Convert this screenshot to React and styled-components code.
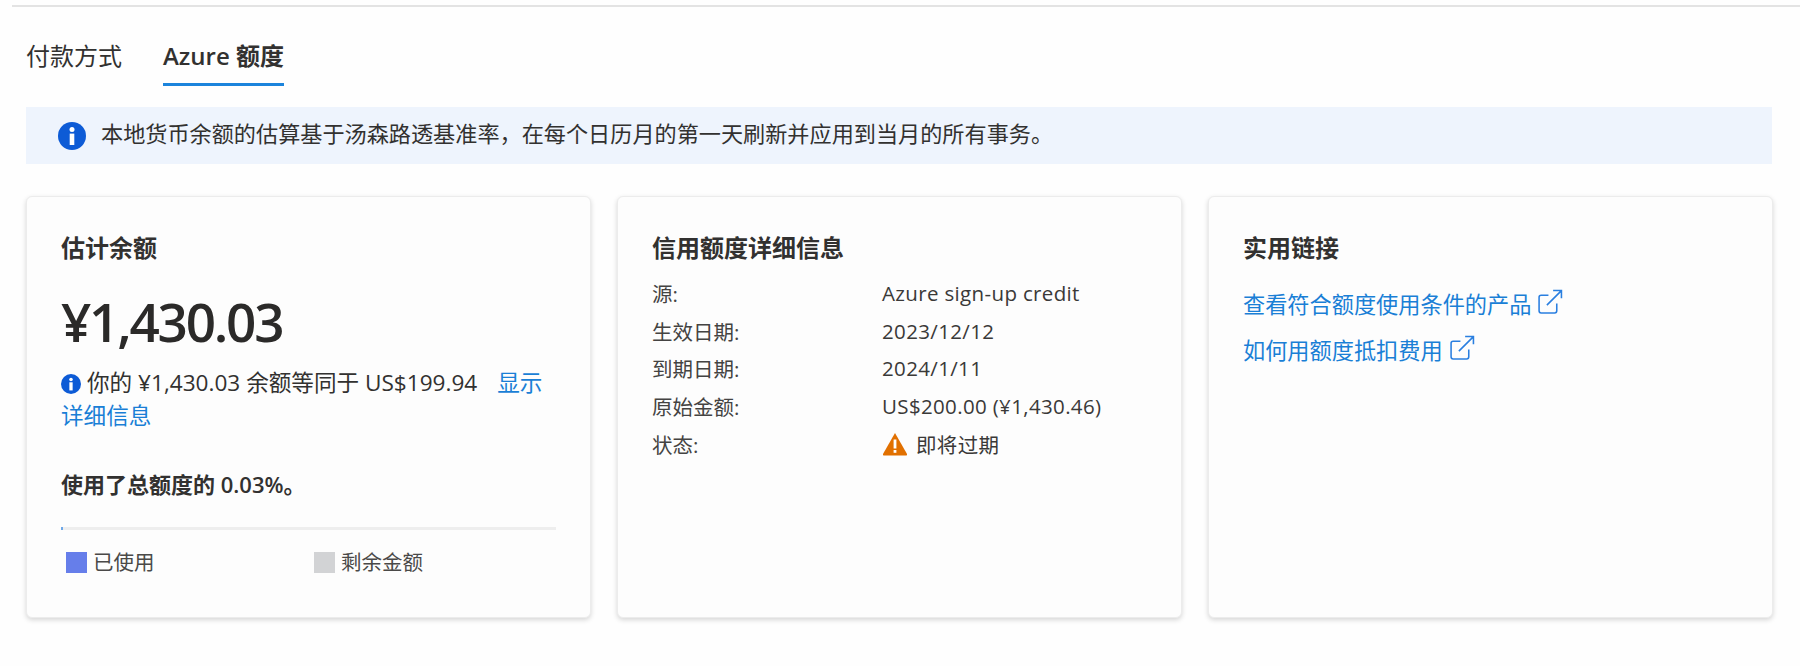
import React from 'react';
import styled, { createGlobalStyle } from 'styled-components';

const GlobalStyle = createGlobalStyle`
  html, body {
    margin: 0;
    padding: 0;
    background: #fefefe;
    color: #323130;
    font-family: "Open Sans", "Noto Sans CJK SC", sans-serif;
  }
`;

const Page = styled.div`
  width: 1800px;
  height: 666px;
  overflow: hidden;
  padding-top: 5px;
  box-sizing: border-box;
`;

const TopRule = styled.div`
  height: 2px;
  margin-left: 12px;
  background: #e3e3e3;
`;

const Tabs = styled.div`
  display: flex;
  gap: 41px;
  padding-left: 26px;
  margin-top: 26px;
`;

const Tab = styled.div`
  font-size: 24px;
  line-height: 46px;
  height: 53px;
  box-sizing: border-box;
  font-weight: ${({ $active }) => ($active ? 600 : 400)};
  border-bottom: 3px solid ${({ $active }) => ($active ? '#1b84dc' : 'transparent')};
`;

const Banner = styled.div`
  display: flex;
  align-items: center;
  gap: 15px;
  height: 57px;
  margin: 21px 28px 0 26px;
  padding-left: 32px;
  background: #eef4fd;
  font-size: 22.15px;
`;

const BannerText = styled.span`
  padding-bottom: 8px;
`;

const Cards = styled.div`
  display: grid;
  grid-template-columns: repeat(3, 565px);
  gap: 26px;
  margin: 32px 0 0 26px;
`;

const Card = styled.section`
  height: 422px;
  box-sizing: border-box;
  padding: 33px 34px 0;
  background: #fdfdfd;
  border-radius: 6px;
  border: 1px solid #ececec;
  box-shadow: 0 2px 5px rgba(0, 0, 0, 0.16);
`;

const CardTitle = styled.h2`
  margin: 0;
  font-size: 24px;
  line-height: 36px;
  font-weight: 600;
`;

const Amount = styled.div`
  margin-top: 26px;
  font-size: 53px;
  line-height: 60px;
  font-weight: 600;
  letter-spacing: -2.2px;
  color: #2b2a29;
`;

const Note = styled.p`
  margin: 14px 0 0;
  font-size: 22.6px;
  line-height: 33px;
`;

const NoteMark = styled.span`
  display: inline-block;
  width: 20px;
  height: 20px;
  margin-right: 6px;
  line-height: 0;
  vertical-align: -3px;
`;

const TextLink = styled.a`
  color: #1a7fd6;
  margin-left: ${({ $indent }) => ($indent ? '14px' : 0)};
`;

const UsedLine = styled.div`
  margin-top: 36px;
  font-size: 22px;
  line-height: 33px;
  font-weight: 600;
`;

const Bar = styled.div`
  height: 3px;
  margin-top: 26px;
  background: #eeeeee;
`;

const BarFill = styled.div`
  height: 100%;
  background: #6ea8e8;
`;

const Legend = styled.div`
  display: grid;
  grid-template-columns: 248px 1fr;
  padding-left: 5px;
  margin-top: 18px;
`;

const LegendItem = styled.div`
  display: flex;
  align-items: center;
  gap: 6px;
  font-size: 20.5px;
  line-height: 28px;
  color: #4a4948;
`;

const Swatch = styled.span`
  width: 21px;
  height: 21px;
  background: ${({ $color }) => $color};
`;

const DetailList = styled.dl`
  margin: 8px 0 0;
  display: grid;
  grid-template-columns: 230px 1fr;
  grid-auto-rows: 37.8px;
  align-items: center;
  font-size: 20.5px;
`;

const Term = styled.dt`
  color: #444342;
`;

const Value = styled.dd`
  margin: 0;
  display: flex;
  align-items: center;
  gap: 8px;
  color: #3a3938;
  letter-spacing: 0.35px;
`;

const LinkList = styled.div`
  display: flex;
  flex-direction: column;
  gap: 13px;
  margin-top: 22px;
  font-size: 22.2px;
  line-height: 33px;
`;

const LinkRow = styled.a`
  display: flex;
  align-items: center;
  gap: 6px;
  color: #1a7fd6;
`;

const ExternalMark = styled.svg`
  width: 26px;
  height: 26px;
  margin-top: -6px;
`;

const InfoIcon = ({ size }) => (
  <svg width={size} height={size} viewBox="0 0 28 28">
    <circle cx="14" cy="14" r="14" fill="#0d5bd6" />
    <circle cx="14" cy="7.6" r="2.5" fill="#fff" />
    <rect x="11.7" y="11.6" width="4.6" height="11.4" fill="#fff" />
  </svg>
);

const WarningIcon = () => (
  <svg width="26" height="24" viewBox="0 0 26 24">
    <path d="M13 1 L25 22 Q25.500 23.500 24 23.500 L2 23.500 Q0.500 23.500 1 22 Z" fill="#e17000" />
    <rect x="11.600" y="7.500" width="2.800" height="9" fill="#fff" />
    <rect x="11.600" y="18" width="2.800" height="2.800" fill="#fff" />
  </svg>
);

const ExternalIcon = () => (
  <ExternalMark viewBox="0 0 25 25" fill="none" stroke="#2a7fe0" strokeWidth="1.500">
    <path d="M11 6 H4 Q2 6 2 8 V21 Q2 23 4 23 H17 Q19 23 19 21 V14" />
    <path d="M9.500 15.500 L23 2 M15.500 1.500 H23.500 V9" />
  </ExternalMark>
);

const details = [
  ['源:', 'Azure sign-up credit'],
  ['生效日期:', '2023/12/12'],
  ['到期日期:', '2024/1/11'],
  ['原始金额:', 'US$200.00 (¥1,430.46)'],
];

const usedPercent = 0.5;

export default function App() {
  return (
    <Page>
      <GlobalStyle />
      <TopRule />
      <Tabs>
        <Tab>付款方式</Tab>
        <Tab $active>Azure 额度</Tab>
      </Tabs>
      <Banner>
        <InfoIcon size={28} />
        <BannerText>本地货币余额的估算基于汤森路透基准率，在每个日历月的第一天刷新并应用到当月的所有事务。</BannerText>
      </Banner>
      <Cards>
        <Card>
          <CardTitle>估计余额</CardTitle>
          <Amount>¥1,430.03</Amount>
          <Note>
            <NoteMark>
              <InfoIcon size={20} />
            </NoteMark>
            你的 ¥1,430.03 余额等同于 US$199.94 <TextLink $indent>显示详细信息</TextLink>
          </Note>
          <UsedLine>使用了总额度的 0.03%。</UsedLine>
          <Bar>
            <BarFill style={{ width: `${usedPercent}%` }} />
          </Bar>
          <Legend>
            <LegendItem>
              <Swatch $color="#667eea" />
              已使用
            </LegendItem>
            <LegendItem>
              <Swatch $color="#d2d3d5" />
              剩余金额
            </LegendItem>
          </Legend>
        </Card>
        <Card>
          <CardTitle>信用额度详细信息</CardTitle>
          <DetailList>
            {details.map(([term, value]) => (
              <React.Fragment key={term}>
                <Term>{term}</Term>
                <Value>{value}</Value>
              </React.Fragment>
            ))}
            <Term>状态:</Term>
            <Value>
              <WarningIcon />
              即将过期
            </Value>
          </DetailList>
        </Card>
        <Card>
          <CardTitle>实用链接</CardTitle>
          <LinkList>
            <LinkRow>
              查看符合额度使用条件的产品
              <ExternalIcon />
            </LinkRow>
            <LinkRow>
              如何用额度抵扣费用
              <ExternalIcon />
            </LinkRow>
          </LinkList>
        </Card>
      </Cards>
    </Page>
  );
}
